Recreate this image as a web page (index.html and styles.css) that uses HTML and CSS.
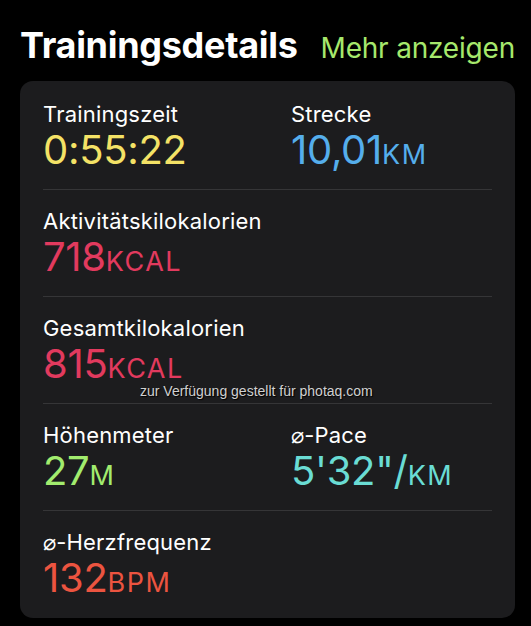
FILE: index.html
```html
<!DOCTYPE html>
<html lang="de">
<head>
    <meta charset="UTF-8">
    <meta name="viewport" content="width=device-width, initial-scale=1.0">
    <title>Trainingsdetails</title>
    <link rel="stylesheet" href="styles.css">
</head>
<body>
    <div class="details">
        <div class="details-header">
            <h1>Trainingsdetails</h1>
            <a class="more-link" href="#">Mehr anzeigen</a>
        </div>

        <div class="card">
            <div class="watermark">zur Verfügung gestellt für photaq.com</div>

            <div class="row">
                <div class="metric">
                    <div class="label">Trainingszeit</div>
                    <div class="value yellow">0:55:22</div>
                </div>
                <div class="metric">
                    <div class="label">Strecke</div>
                    <div class="value blue">10,01<span class="unit">KM</span></div>
                </div>
            </div>
            <div class="row">
                <div class="metric">
                    <div class="label">Aktivitätskilokalorien</div>
                    <div class="value red">718<span class="unit">KCAL</span></div>
                </div>
            </div>
            <div class="row">
                <div class="metric">
                    <div class="label">Gesamtkilokalorien</div>
                    <div class="value red">815<span class="unit">KCAL</span></div>
                </div>
            </div>
            <div class="row">
                <div class="metric">
                    <div class="label">Höhenmeter</div>
                    <div class="value green">27<span class="unit">M</span></div>
                </div>
                <div class="metric">
                    <div class="label">⌀-Pace</div>
                    <div class="value cyan">5'32"/<span class="unit">KM</span></div>
                </div>
            </div>
            <div class="row">
                <div class="metric">
                    <div class="label">⌀-Herzfrequenz</div>
                    <div class="value orange">132<span class="unit">BPM</span></div>
                </div>
            </div>
        </div>
    </div>
</body>
</html>
```

FILE: styles.css
```css
body {
    font-family: Inter, "Noto Sans", sans-serif;
    background-color: #000000;
    color: #ffffff;
    margin: 0;
    padding: 23px 16px 9px 20px;
}
.details-header {
    display: flex;
    align-items: baseline;
    justify-content: space-between;
    height: 44px;
    margin-bottom: 14px;
}
.details-header h1 {
    margin: 0;
    font-size: 36px;
    line-height: 44px;
    font-weight: 700;
    letter-spacing: -0.3px;
}
.more-link {
    color: #a6e86c;
    font-size: 28px;
    line-height: 44px;
    text-decoration: none;
    letter-spacing: -0.2px;
}
.card {
    position: relative;
    background-color: #1c1c1e;
    border-radius: 13px;
    padding: 2px 23px 18px 23px;
}
.row {
    display: grid;
    grid-template-columns: 248px 1fr;
    padding: 17px 0 17px 0;
    border-bottom: 1px solid #353537;
}
.row:last-child {
    border-bottom: none;
    padding-bottom: 0;
}
.label {
    font-size: 22px;
    line-height: 28px;
    color: #ffffff;
    letter-spacing: 0.2px;
}
.value {
    font-size: 40px;
    line-height: 44px;
    height: 44px;
    font-weight: 400;
    letter-spacing: -0.3px;
}
.unit {
    font-size: 27px;
    line-height: 1;
    letter-spacing: 1.5px;
}
.yellow { color: #f4e266; }
.blue { color: #55aeec; }
.red { color: #e23a5e; }
.green { color: #a2ec6e; }
.cyan { color: #6adcd4; }
.orange { color: #ec5440; }
.watermark {
    position: absolute;
    left: 120px;
    top: 302px;
    font-family: "Liberation Sans", Arial, sans-serif;
    font-size: 14px;
    color: #d0d0d0;
    text-shadow: 1px 1px 1px #000000;
}
```
